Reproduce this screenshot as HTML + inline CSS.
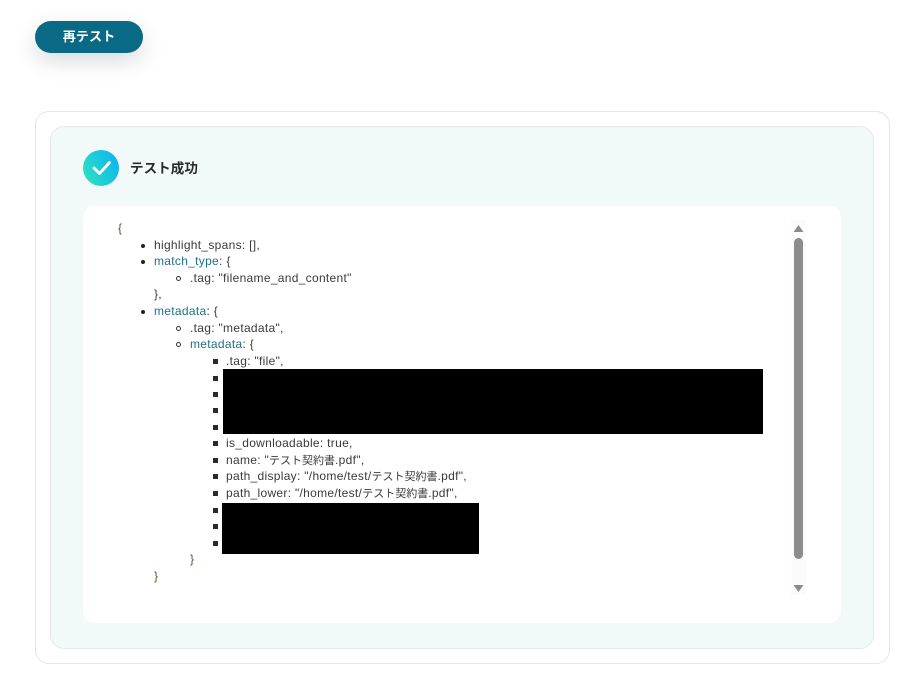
<!DOCTYPE html>
<html lang="ja">
<head>
<meta charset="utf-8">
<style>
html,body{margin:0;padding:0;width:914px;height:687px;overflow:hidden;background:#fff;}
body{position:relative;font-family:"Liberation Sans","Noto Sans CJK JP",sans-serif;}
.a{position:absolute;box-sizing:border-box;}
.btn{left:35px;top:21px;width:108px;height:32px;border-radius:16px;background:#0a6a85;color:#fff;font-weight:700;font-size:13.2px;line-height:32px;text-align:center;box-shadow:0 8px 22px rgba(40,60,80,.18);}
.outer{left:35px;top:111px;width:855px;height:553px;border:1px solid #e4e5e9;border-radius:14px;background:#fff;}
.inner{left:50px;top:126px;width:824px;height:523px;border:1px solid #e6e9ea;border-radius:14px;background:#f2faf9;}
.white{left:83px;top:206px;width:758px;height:417px;border-radius:12px;background:#fff;}
.icon{left:83px;top:150px;width:36px;height:36px;}
.title{left:130px;top:159px;font-size:13.6px;line-height:20px;font-weight:700;color:#2a2a2a;white-space:nowrap;}
.l{position:absolute;font-size:12px;letter-spacing:.3px;line-height:16px;color:#3a3a3a;white-space:nowrap;}
.l u{text-decoration:none;font-size:11px;letter-spacing:0;}
.k{color:#1f6f8b;}
.b{color:#6e4a2c;}
.d{position:absolute;width:4px;height:4px;background:#222;border-radius:50%;}
.c{position:absolute;width:5px;height:5px;border:1px solid #333;border-radius:50%;box-sizing:border-box;}
.s{position:absolute;width:5px;height:5px;background:#2a2a2a;}
.red{position:absolute;background:#000;}
</style>
</head>
<body>
<div class="a btn">再テスト</div>
<div class="a outer"></div>
<div class="a inner"></div>
<svg class="a icon" viewBox="0 0 36 36">
<defs><linearGradient id="g" x1="0" y1="0.75" x2="1" y2="0.25"><stop offset="0" stop-color="#2fe0c2"/><stop offset="1" stop-color="#0cb4f0"/></linearGradient></defs>
<circle cx="18" cy="18" r="18" fill="url(#g)"/>
<path d="M11 18L16.5 23.5L26.5 12.5" fill="none" stroke="#fff" stroke-width="2.8" stroke-linecap="round" stroke-linejoin="round"/>
</svg>
<div class="a title">テスト成功</div>
<div class="a white"></div>

<div class="l b" style="left:118px;top:220px">{</div>

<i class="d" style="left:141px;top:244px"></i>
<div class="l" style="left:154px;top:237px">highlight_spans: [],</div>
<i class="d" style="left:141px;top:260px"></i>
<div class="l" style="left:154px;top:253px"><span class="k">match_type</span>: {</div>
<i class="c" style="left:176px;top:276px"></i>
<div class="l" style="left:190px;top:270px">.tag: "filename_and_content"</div>
<div class="l" style="left:154px;top:286px">},</div>
<i class="d" style="left:141px;top:310px"></i>
<div class="l" style="left:154px;top:303px"><span class="k">metadata</span>: {</div>
<i class="c" style="left:176px;top:326px"></i>
<div class="l" style="left:190px;top:320px">.tag: "metadata",</div>
<i class="c" style="left:176px;top:342px"></i>
<div class="l" style="left:190px;top:336px"><span class="k">metadata</span>: {</div>
<i class="s" style="left:213px;top:359px"></i>
<div class="l" style="left:226px;top:353px">.tag: "file",</div>
<i class="s" style="left:213px;top:376px"></i>
<i class="s" style="left:213px;top:392px"></i>
<i class="s" style="left:213px;top:408px"></i>
<i class="s" style="left:213px;top:425px"></i>
<div class="red" style="left:223px;top:369px;width:540px;height:65px"></div>
<i class="s" style="left:213px;top:441px"></i>
<div class="l" style="left:226px;top:435px">is_downloadable: true,</div>
<i class="s" style="left:213px;top:458px"></i>
<div class="l" style="left:226px;top:452px">name: "<u>テスト契約書</u>.pdf",</div>
<i class="s" style="left:213px;top:474px"></i>
<div class="l" style="left:226px;top:468px">path_display: "/home/test/<u>テスト契約書</u>.pdf",</div>
<i class="s" style="left:213px;top:491px"></i>
<div class="l" style="left:226px;top:485px">path_lower: "/home/test/<u>テスト契約書</u>.pdf",</div>
<i class="s" style="left:213px;top:508px"></i>
<i class="s" style="left:213px;top:524px"></i>
<i class="s" style="left:213px;top:541px"></i>
<div class="red" style="left:222px;top:503px;width:257px;height:51px"></div>
<div class="l b" style="left:190px;top:551px">}</div>
<div class="l b" style="left:154px;top:568px">}</div>

<div class="a" style="left:791px;top:220px;width:15px;height:375px;background:#fbfbfb"></div>
<svg class="a" style="left:791px;top:220px;width:15px;height:375px" viewBox="0 0 15 375">
<path d="M7.5 5L12.5 12H2.5Z" fill="#8c8c8c"/>
<rect x="3" y="18" width="9" height="321" rx="4.5" fill="#8c8c8c"/>
<path d="M2.5 365H12.5L7.5 372Z" fill="#8c8c8c"/>
</svg>
</body>
</html>
